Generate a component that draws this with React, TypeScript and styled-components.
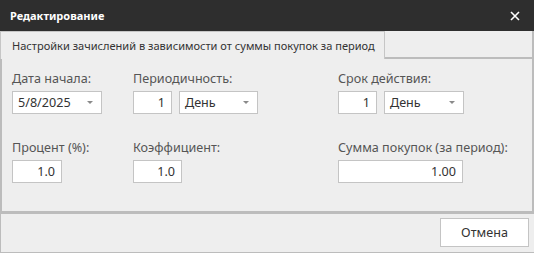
import React from "react";
import styled, { createGlobalStyle } from "styled-components";

const Global = createGlobalStyle`
  html, body { margin: 0; padding: 0; background: #eeeeee; }
  body { font-family: "Noto Sans", "Open Sans", sans-serif; }
  * { box-sizing: border-box; }
`;

const Window = styled.div`
  width: 534px;
  height: 253px;
  display: flex;
  flex-direction: column;
  background: #eeeeee;
`;

const TitleBar = styled.div`
  height: 31px;
  flex: none;
  background: #2e2e2e;
  display: flex;
  align-items: center;
  justify-content: space-between;
  padding: 0 14px 0 10px;
  color: #ffffff;
  font-size: 11px;
  font-weight: 700;
`;

const CloseIcon = styled.svg`
  width: 10px;
  height: 10px;
  display: block;
`;

const TabStrip = styled.div`
  display: flex;
  height: 28px;
  flex: none;
`;

const Tab = styled.div`
  width: 385px;
  border: 1px solid #c6c6c6;
  border-bottom: none;
  display: flex;
  align-items: center;
  padding-left: 11px;
  font-size: 11.05px;
  white-space: nowrap;
  color: #333333;
`;

const TabFiller = styled.div`
  flex: 1;
  border-bottom: 2px solid #bcbcbc;
  border-right: 2px solid #bcbcbc;
`;

const Panel = styled.div`
  height: 155px;
  flex: none;
  border: 2px solid #bcbcbc;
  border-top: none;
  border-bottom-width: 3px;
  padding: 11px 0 0 10px;
  display: grid;
  grid-template-columns: 121px 205px 1fr;
  align-content: start;
  row-gap: 25px;
`;

const Field = styled.div`
  display: flex;
  flex-direction: column;
  gap: 4px;
`;

const Label = styled.div`
  font-size: 12.6px;
  line-height: 17px;
  color: #555555;
  white-space: nowrap;
`;

const Controls = styled.div`
  display: flex;
  gap: 7px;
`;

const Box = styled.div<{ $w: number }>`
  width: ${(p) => p.$w}px;
  height: 23px;
  background: #ffffff;
  border: 1px solid #c4c4c4;
  display: flex;
  align-items: center;
  font-size: 12.6px;
  color: #333333;
`;

const NumberBox = styled(Box)`
  justify-content: flex-end;
  padding-right: 6px;
`;

const SelectBox = styled(Box)`
  justify-content: space-between;
  padding: 0 8px 0 5px;
`;

const Arrow = styled.span`
  width: 0;
  height: 0;
  border-left: 3px solid transparent;
  border-right: 3px solid transparent;
  border-top: 3px solid #8a8a8a;
`;

const Footer = styled.div`
  flex: 1;
  border-left: 1px solid #bcbcbc;
  border-bottom: 1px solid #bcbcbc;
  display: flex;
  justify-content: flex-end;
  align-items: flex-start;
  padding: 4px 5px 0 0;
`;

const Button = styled.button`
  width: 89px;
  height: 29px;
  background: #ffffff;
  border: 1px solid #c4c4c4;
  font-family: inherit;
  font-size: 12.6px;
  color: #333333;
  padding: 0;
`;

const Select = ({ w, value }: { w: number; value: string }) => (
  <SelectBox $w={w}>
    <span>{value}</span>
    <Arrow />
  </SelectBox>
);

export default function App() {
  return (
    <>
      <Global />
      <Window>
        <TitleBar>
          <span>Редактирование</span>
          <CloseIcon viewBox="0 0 10 10">
            <path d="M1 1L9 9M9 1L1 9" stroke="#ffffff" strokeWidth="1.6" />
          </CloseIcon>
        </TitleBar>
        <TabStrip>
          <Tab>Настройки зачислений в зависимости от суммы покупок за период</Tab>
          <TabFiller />
        </TabStrip>
        <Panel>
          <Field>
            <Label>Дата начала:</Label>
            <Select w={90} value="5/8/2025" />
          </Field>
          <Field>
            <Label>Периодичность:</Label>
            <Controls>
              <NumberBox $w={39}>1</NumberBox>
              <Select w={79} value="День" />
            </Controls>
          </Field>
          <Field>
            <Label>Срок действия:</Label>
            <Controls>
              <NumberBox $w={39}>1</NumberBox>
              <Select w={80} value="День" />
            </Controls>
          </Field>
          <Field>
            <Label>Процент (%):</Label>
            <NumberBox $w={50}>1.0</NumberBox>
          </Field>
          <Field>
            <Label>Коэффициент:</Label>
            <NumberBox $w={49}>1.0</NumberBox>
          </Field>
          <Field>
            <Label>Сумма покупок (за период):</Label>
            <NumberBox $w={125}>1.00</NumberBox>
          </Field>
        </Panel>
        <Footer>
          <Button>Отмена</Button>
        </Footer>
      </Window>
    </>
  );
}
